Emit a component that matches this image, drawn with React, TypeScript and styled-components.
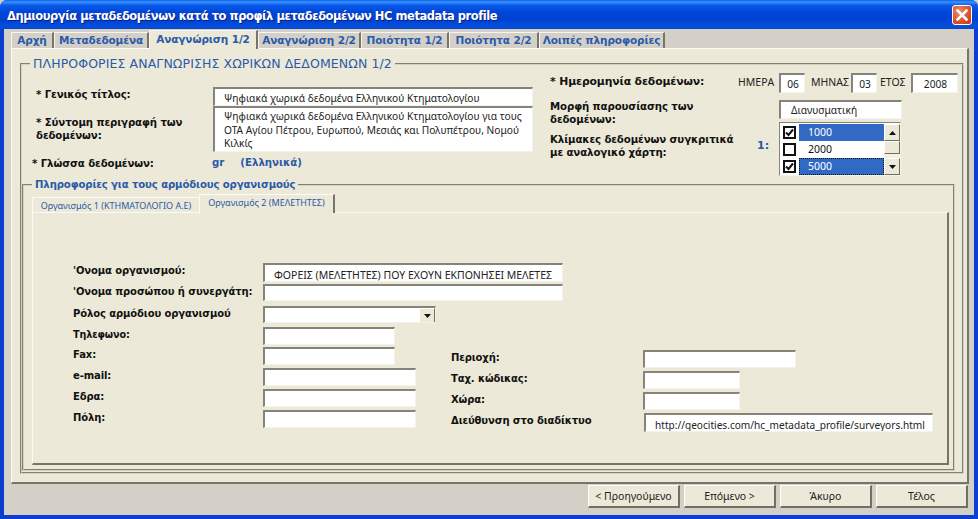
import React from 'react';
import styled, { createGlobalStyle } from 'styled-components';

const Global = createGlobalStyle`
    html, body { margin: 0; padding: 0; background: #d4d0c8; }
    * { box-sizing: border-box; }
`;

const Window = styled.div`
    width: 978px;
    height: 519px;
    display: flex;
    flex-direction: column;
    background: #0a3ed0;
    border-radius: 7px 7px 0 0;
    overflow: hidden;
    font-family: "Noto Sans", Tahoma, sans-serif;
`;

const TitleBar = styled.div`
    height: 29px;
    flex: none;
    display: flex;
    align-items: center;
    justify-content: space-between;
    padding: 2px 6px 0 7px;
    background: linear-gradient(180deg, #0a60e8 0, #3a93ff 2px, #0a5cec 5px, #0046d8 12px, #0042cf 20px, #0450e0 26px, #0a48c8 29px);
`;

const TitleText = styled.span`
    color: #fff;
    font: bold 11.5px "DejaVu Sans", sans-serif;
    letter-spacing: -0.45px;
    text-shadow: 1px 1px 0 #0f1f80;
    white-space: nowrap;
`;

const CloseButton = styled.div`
    width: 20px;
    height: 20px;
    margin-top: -1px;
    border: 1px solid #fff;
    border-radius: 3px;
    background: radial-gradient(circle at 35% 30%, #ee8a68, #dd4f28 60%, #c23a18);
    display: flex;
    align-items: center;
    justify-content: center;
`;

const Body = styled.div`
    flex: 1;
    margin: 0 4px 4px 4px;
    background: #d4d0c8;
    display: flex;
    flex-direction: column;
    padding: 1px 5px 0 7px;
`;

const TabStrip = styled.div`
    height: 18px;
    flex: none;
    display: flex;
    align-items: flex-end;
`;

const Tab = styled.div<{ $w: number; $active?: boolean }>`
    width: ${p => p.$w}px;
    height: ${p => (p.$active ? 19 : 16)}px;
    flex: none;
    margin-bottom: ${p => (p.$active ? -1 : 0)}px;
    position: relative;
    z-index: ${p => (p.$active ? 1 : 0)};
    display: flex;
    justify-content: center;
    padding-top: ${p => (p.$active ? 2 : 1)}px;
    background: ${p => (p.$active ? '#ece9d8' : '#d4d0c8')};
    border-top: 1px solid #f6f5ee;
    border-left: 1px solid #f6f5ee;
    border-right: 2px solid #77756a;
    color: #2a5aa8;
    font: bold 10.5px "DejaVu Sans", sans-serif;
    letter-spacing: -0.12px;
    white-space: nowrap;
`;

const Panel = styled.div`
    width: 958px;
    height: 436px;
    flex: none;
    background: #ece9d8;
    border-top: 1px solid #fbfaf4;
    border-left: 1px solid #fbfaf4;
    border-right: 2px solid #77756a;
    border-bottom: 2px solid #77756a;
    padding: 7px 4px 0 8px;
`;

const Group = styled.fieldset`
    margin: 0;
    padding: 0;
    min-width: 0;
    border: 2px groove #d5d2c0;
    border-radius: 1px;
`;

const OuterGroup = styled(Group)`
    width: 944px;
    height: 418px;
`;

const OuterLegend = styled.legend`
    margin-left: 8px;
    padding: 0 3px;
    color: #2a5aa8;
    font: 12.5px "DejaVu Sans", sans-serif;
    letter-spacing: 0.1px;
    line-height: 15px;
`;

const TopSection = styled.div`
    height: 111px;
    display: grid;
    grid-template-columns: 528px 1fr;
    margin-top: -6px;
`;

const LeftColumn = styled.div`
    display: grid;
    grid-template-columns: 177px 320px;
    grid-template-rows: 19px 46px 26px;
    padding: 22px 0 0 14px;
`;

const StrongLabel = styled.div<{ $size?: number }>`
    color: #111;
    font: bold ${p => p.$size ?? 10.2}px/13px "DejaVu Sans", sans-serif;
    letter-spacing: -0.1px;
`;

const TitleLabel = styled(StrongLabel)`
    margin-top: 1px;
`;

const SummaryLabel = styled(StrongLabel)`
    padding: 10px 10px 0 0;
`;

const LangLabel = styled(StrongLabel)`
    margin: 5px 0 0 -4px;
`;

const Inset = styled.div<{ $w?: number; $h?: number }>`
    width: ${p => (p.$w ? `${p.$w}px` : '100%')};
    height: ${p => (p.$h ? `${p.$h}px` : '100%')};
    flex: none;
    background: #fff;
    border-top: 2px solid #85837a;
    border-left: 2px solid #85837a;
    border-right: 1px solid #f4f3e8;
    border-bottom: 1px solid #f4f3e8;
    color: #222;
    font: 10.2px/14px "Noto Sans", sans-serif;
    padding: 2px 0 0 9px;
    white-space: nowrap;
    overflow: hidden;
`;

const Memo = styled(Inset)`
    padding-top: 2px;
    line-height: 13.5px;
    white-space: normal;
`;

const LangValue = styled.div`
    display: flex;
    gap: 16px;
    margin-left: -1px;
    padding: 4px 0 0 0;
    color: #2a5aa8;
    font: bold 10.2px/14px "DejaVu Sans", sans-serif;
`;

const RightColumn = styled.div`
    display: flex;
    flex-direction: column;
    padding: 8px 0 0 0;
`;

const DateRow = styled.div`
    height: 27px;
    display: flex;
    align-items: flex-start;
`;

const DateLabel = styled(StrongLabel)`
    width: 188px;
    flex: none;
    margin-top: 2px;
`;

const DatePart = styled.span<{ $w: number; $pad?: number }>`
    width: ${p => p.$w}px;
    flex: none;
    color: #222;
    font: 10.5px/14px "Noto Sans", sans-serif;
    padding: 2px 0 0 ${p => p.$pad ?? 0}px;
`;

const DateInput = styled(Inset)`
    text-align: center;
    padding: 2px 0 0 1px;
`;

const ValueRow = styled.div`
    display: flex;
    height: 19px;
`;

const FormatLabel = styled(StrongLabel)`
    width: 229px;
    flex: none;
    padding: 0 60px 0 0;
`;

const FormatInput = styled(Inset)`
    padding: 1px 0 0 10px;
`;

const ScaleRow = styled.div`
    display: flex;
    margin-top: 3px;
    height: 54px;
`;

const ScaleLabel = styled(StrongLabel)`
    width: 207px;
    flex: none;
    padding: 11px 20px 0 0;
`;

const ScalePrefix = styled.div`
    width: 22px;
    flex: none;
    padding-top: 17px;
    color: #2a5aa8;
    font: bold 11px/14px "DejaVu Sans", sans-serif;
`;

const ListBox = styled.div`
    width: 122px;
    height: 54px;
    display: flex;
    background: #fff;
    border-top: 1px solid #85837a;
    border-left: 1px solid #85837a;
    border-right: 1px solid #f4f3e8;
    border-bottom: 1px solid #f4f3e8;
    padding: 1px 0 0 1px;
`;

const ListRows = styled.div`
    flex: 1;
    display: flex;
    flex-direction: column;
`;

const ListRow = styled.div`
    height: 17px;
    display: flex;
    align-items: center;
    padding-left: 2px;
`;

const CheckBox = styled.span`
    width: 13px;
    height: 13px;
    flex: none;
    background: #fff;
    border: 2px solid #111;
    display: flex;
    align-items: center;
    justify-content: center;
`;

const RowText = styled.span<{ $selected?: boolean; $focus?: boolean }>`
    flex: 1;
    height: 17px;
    margin-left: 3px;
    padding-left: 9px;
    color: ${p => (p.$selected ? '#fff' : '#111')};
    background: ${p => (p.$selected ? '#316ac5' : '#fff')};
    outline: ${p => (p.$focus ? '1px dotted #111' : 'none')};
    outline-offset: -1px;
    font: 10.5px/16px "Noto Sans", sans-serif;
`;

const ScrollBar = styled.div`
    width: 16px;
    flex: none;
    display: flex;
    flex-direction: column;
    background: #f3f1e6;
`;

const ScrollButton = styled.div<{ $h?: number }>`
    height: ${p => p.$h ?? 17}px;
    flex: none;
    background: #ece9d8;
    border-top: 1px solid #fff;
    border-left: 1px solid #fff;
    border-right: 1px solid #716f64;
    border-bottom: 1px solid #716f64;
    display: flex;
    align-items: center;
    justify-content: center;
`;

const ScrollGap = styled.div`
    flex: 1;
`;

const InnerGroup = styled(Group)`
    width: 933px;
    height: 294px;
    margin: 1px 0 0 0;
    padding: 0 0 0 8px;
`;

const InnerLegend = styled.legend`
    margin-left: 0;
    padding: 0 3px;
    color: #2a5aa8;
    font: bold 10.1px/15px "DejaVu Sans", sans-serif;
    letter-spacing: -0.1px;
`;

const SubTabStrip = styled.div`
    height: 17px;
    display: flex;
    align-items: flex-end;
    margin-top: 3px;
`;

const SubTab = styled.div<{ $w: number; $active?: boolean }>`
    width: ${p => p.$w}px;
    height: ${p => (p.$active ? 19 : 15)}px;
    flex: none;
    margin-bottom: ${p => (p.$active ? -1 : 0)}px;
    position: relative;
    z-index: ${p => (p.$active ? 1 : 0)};
    display: flex;
    justify-content: center;
    padding-top: 1px;
    background: #ece9d8;
    border-top: 1px solid #fbfaf4;
    border-left: 1px solid #fbfaf4;
    border-right: ${p => (p.$active ? '2px solid #77756a' : 'none')};
    color: #2a5aa8;
    font: 9px/13px "Noto Sans", sans-serif;
    white-space: nowrap;
`;

const SubPanel = styled.div`
    width: 917px;
    height: 253px;
    background: #ece9d8;
    border-top: 1px solid #fbfaf4;
    border-left: 1px solid #fbfaf4;
    border-right: 2px solid #77756a;
    border-bottom: 2px solid #77756a;
    padding: 50px 0 0 39px;
    display: flex;
`;

const FormLeft = styled.div`
    width: 378px;
    flex: none;
    display: flex;
    flex-direction: column;
`;

const FormRow = styled.div<{ $h: number }>`
    height: ${p => p.$h}px;
    flex: none;
    display: flex;
    align-items: flex-start;
`;

const FieldLabel = styled(StrongLabel)<{ $w: number }>`
    width: ${p => p.$w}px;
    flex: none;
    padding: 1px 0 0 1px;
    white-space: nowrap;
    font-size: ${p => p.$size ?? 10}px;
`;

const FormRight = styled.div`
    display: flex;
    flex-direction: column;
    padding-top: 87px;
`;

const Field = styled(Inset)<{ $size?: number }>`
    padding: 3px 0 0 9px;
    font-size: ${p => p.$size ?? 10.2}px;
`;

const ComboArrow = styled(ScrollButton)`
    width: 16px;
    height: 15px;
    margin-left: auto;
`;

const Combo = styled(Inset)`
    display: flex;
    padding: 0;
`;

const Footer = styled.div`
    display: flex;
    justify-content: flex-end;
    gap: 4px;
    padding: 1px 1px 0 0;
`;

const Button = styled.div`
    width: 92px;
    height: 23px;
    display: flex;
    align-items: center;
    justify-content: center;
    background: #ece9d8;
    border-top: 1px solid #fff;
    border-left: 1px solid #fff;
    border-right: 2px solid #716f64;
    border-bottom: 2px solid #716f64;
    color: #222;
    font: 10.5px "Noto Sans", sans-serif;
`;

const Up = () => (
  <svg width="7" height="4" viewBox="0 0 7 4"><path d="M3.5 0 7 4H0z" fill="#111" /></svg>
);
const Down = () => (
  <svg width="7" height="4" viewBox="0 0 7 4"><path d="M0 0h7L3.5 4z" fill="#111" /></svg>
);
const Tick = () => (
  <svg width="9" height="9" viewBox="0 0 9 9"><path d="M1 4.5 3.5 7 8 1.5" fill="none" stroke="#111" strokeWidth="2" /></svg>
);

const mainTabs: [string, number, boolean?][] = [
  ['Αρχή', 43],
  ['Μεταδεδομένα', 95],
  ['Αναγνώριση 1/2', 109, true],
  ['Αναγνώριση 2/2', 103],
  ['Ποιότητα 1/2', 88],
  ['Ποιότητα 2/2', 90],
  ['Λοιπές πληροφορίες', 126],
];

const App: React.FC = () => {
  return (
    <Window>
      <Global />
      <TitleBar>
        <TitleText>Δημιουργία μεταδεδομένων κατά το προφίλ μεταδεδομένων HC metadata profile</TitleText>
        <CloseButton>
          <svg width="12" height="12" viewBox="0 0 12 12">
            <path d="M1.5 1.5 10.5 10.5M10.5 1.5 1.5 10.5" stroke="#fff" strokeWidth="2.6" strokeLinecap="square" />
          </svg>
        </CloseButton>
      </TitleBar>
      <Body>
        <TabStrip>
          {mainTabs.map(([label, w, active]) => (
            <Tab key={label} $w={w} $active={active}>{label}</Tab>
          ))}
        </TabStrip>
        <Panel>
          <OuterGroup>
            <OuterLegend>ΠΛΗΡΟΦΟΡΙΕΣ ΑΝΑΓΝΩΡΙΣΗΣ ΧΩΡΙΚΩΝ ΔΕΔΟΜΕΝΩΝ 1/2</OuterLegend>
            <TopSection>
              <LeftColumn>
                <TitleLabel>* Γενικός τίτλος:</TitleLabel>
                <Inset>Ψηφιακά χωρικά δεδομένα Ελληνικού Κτηματολογίου</Inset>
                <SummaryLabel>* Σύντομη περιγραφή των δεδομένων:</SummaryLabel>
                <Memo>Ψηφιακά χωρικά δεδομένα Ελληνικού Κτηματολογίου για τους ΟΤΑ Αγίου Πέτρου, Ευρωπού, Μεσιάς και Πολυπέτρου, Νομού Κιλκίς</Memo>
                <LangLabel>* Γλώσσα δεδομένων:</LangLabel>
                <LangValue><span>gr</span><span>(Ελληνικά)</span></LangValue>
              </LeftColumn>
              <RightColumn>
                <DateRow>
                  <DateLabel $size={10.8}>* Ημερομηνία δεδομένων:</DateLabel>
                  <DatePart $w={41}>ΗΜΕΡΑ</DatePart>
                  <DateInput $w={26} $h={20}>06</DateInput>
                  <DatePart $w={46} $pad={6}>ΜΗΝΑΣ</DatePart>
                  <DateInput $w={26} $h={20}>03</DateInput>
                  <DatePart $w={34} $pad={3}>ΕΤΟΣ</DatePart>
                  <DateInput $w={47} $h={20}>2008</DateInput>
                </DateRow>
                <ValueRow>
                  <FormatLabel>Μορφή παρουσίασης των δεδομένων:</FormatLabel>
                  <FormatInput $w={123} $h={19}>Διανυσματική</FormatInput>
                </ValueRow>
                <ScaleRow>
                  <ScaleLabel>Κλίμακες δεδομένων συγκριτικά με αναλογικό χάρτη:</ScaleLabel>
                  <ScalePrefix>1:</ScalePrefix>
                  <ListBox>
                    <ListRows>
                      <ListRow><CheckBox><Tick /></CheckBox><RowText $selected>1000</RowText></ListRow>
                      <ListRow><CheckBox /><RowText>2000</RowText></ListRow>
                      <ListRow><CheckBox><Tick /></CheckBox><RowText $selected $focus>5000</RowText></ListRow>
                    </ListRows>
                    <ScrollBar>
                      <ScrollButton><Up /></ScrollButton>
                      <ScrollButton $h={13} />
                      <ScrollGap />
                      <ScrollButton><Down /></ScrollButton>
                    </ScrollBar>
                  </ListBox>
                </ScaleRow>
              </RightColumn>
            </TopSection>
            <InnerGroup>
              <InnerLegend>Πληροφορίες για τους αρμόδιους οργανισμούς</InnerLegend>
              <SubTabStrip>
                <SubTab $w={167}>Οργανισμός 1 (ΚΤΗΜΑΤΟΛΟΓΙΟ Α.Ε)</SubTab>
                <SubTab $w={136} $active>Οργανισμός 2 (ΜΕΛΕΤΗΤΕΣ)</SubTab>
              </SubTabStrip>
              <SubPanel>
                <FormLeft>
                  <FormRow $h={21}><FieldLabel $w={191}>'Ονομα οργανισμού:</FieldLabel><Field $w={300} $h={19} $size={10.5}>ΦΟΡΕΙΣ (ΜΕΛΕΤΗΤΕΣ) ΠΟΥ ΕΧΟΥΝ ΕΚΠΟΝΗΣΕΙ ΜΕΛΕΤΕΣ</Field></FormRow>
                  <FormRow $h={22}><FieldLabel $w={191}>'Ονομα προσώπου ή συνεργάτη:</FieldLabel><Field $w={300} $h={17} /></FormRow>
                  <FormRow $h={21}>
                    <FieldLabel $w={191}>Ρόλος αρμόδιου οργανισμού</FieldLabel>
                    <Combo $w={173} $h={17}><ComboArrow><Down /></ComboArrow></Combo>
                  </FormRow>
                  <FormRow $h={20}><FieldLabel $w={191} $size={9.6}>Τηλεφωνο:</FieldLabel><Field $w={132} $h={18} /></FormRow>
                  <FormRow $h={21}><FieldLabel $w={191}>Fax:</FieldLabel><Field $w={132} $h={18} /></FormRow>
                  <FormRow $h={21}><FieldLabel $w={191}>e-mail:</FieldLabel><Field $w={153} $h={18} /></FormRow>
                  <FormRow $h={21}><FieldLabel $w={191}>Εδρα:</FieldLabel><Field $w={153} $h={18} /></FormRow>
                  <FormRow $h={21}><FieldLabel $w={191}>Πόλη:</FieldLabel><Field $w={153} $h={18} /></FormRow>
                </FormLeft>
                <FormRight>
                  <FormRow $h={21}><FieldLabel $w={193}>Περιοχή:</FieldLabel><Field $w={153} $h={18} /></FormRow>
                  <FormRow $h={21}><FieldLabel $w={193}>Ταχ. κώδικας:</FieldLabel><Field $w={97} $h={18} /></FormRow>
                  <FormRow $h={21}><FieldLabel $w={193}>Χώρα:</FieldLabel><Field $w={97} $h={18} /></FormRow>
                  <FormRow $h={21}><FieldLabel $w={194}>Διεύθυνση στο διαδίκτυο</FieldLabel><Field $w={289} $h={19} $size={10.1}>http://geocities.com/hc_metadata_profile/surveyors.html</Field></FormRow>
                </FormRight>
              </SubPanel>
            </InnerGroup>
          </OuterGroup>
        </Panel>
        <Footer>
          <Button>&lt; Προηγούμενο</Button>
          <Button>Επόμενο &gt;</Button>
          <Button>Άκυρο</Button>
          <Button>Τέλος</Button>
        </Footer>
      </Body>
    </Window>
  );
};

export default App;
